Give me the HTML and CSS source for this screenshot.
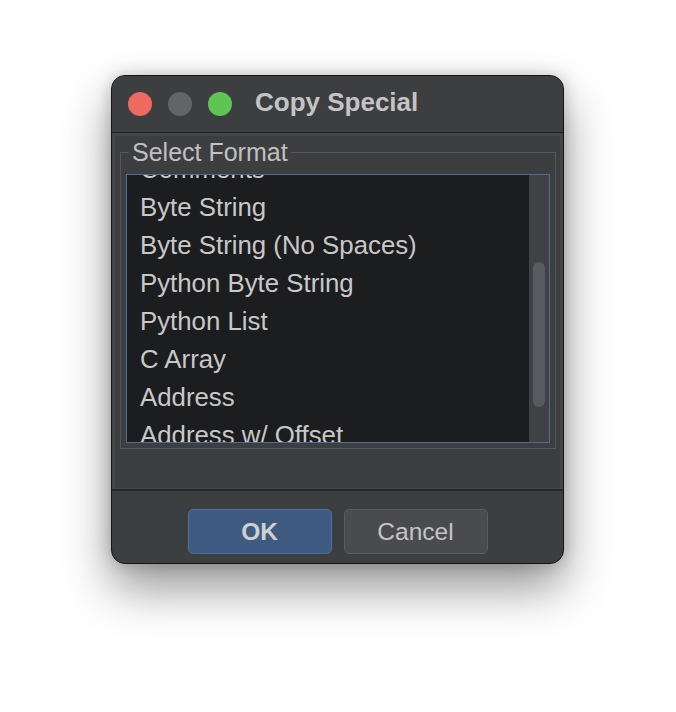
FILE: index.html
```html
<!DOCTYPE html>
<html>
<head>
<meta charset="utf-8">
<title>Copy Special</title>
<link rel="stylesheet" href="styles.css">
</head>
<body>
<div class="window">
  <div class="titlebar">
    <span class="light red"></span>
    <span class="light gray"></span>
    <span class="light green"></span>
    <span class="title">Copy Special</span>
  </div>
  <div class="panel">
    <fieldset class="group">
      <legend class="legend">Select Format</legend>
      <div class="listbox">
        <div class="viewport">
          <ul class="items">
            <li>Comments</li>
            <li>Byte String</li>
            <li>Byte String (No Spaces)</li>
            <li>Python Byte String</li>
            <li>Python List</li>
            <li>C Array</li>
            <li>Address</li>
            <li>Address w/ Offset</li>
          </ul>
        </div>
        <div class="track"><div class="thumb"></div></div>
      </div>
    </fieldset>
  </div>
  <div class="buttons">
    <button class="btn ok">OK</button>
    <button class="btn cancel">Cancel</button>
  </div>
</div>
</body>
</html>
```

FILE: styles.css
```css
html, body {
  margin: 0;
  padding: 0;
  background: #ffffff;
}
body {
  font-family: "Liberation Sans", Arial, sans-serif;
  padding: 75px 0 0 111px;
  min-height: 712px;
  box-sizing: border-box;
}
.window {
  width: 451px;
  height: 487px;
  border: 1px solid #161617;
  border-radius: 14px;
  background: #3d3e40;
  box-shadow: 0 24px 48px rgba(0, 0, 0, 0.42), 0 0 16px rgba(0, 0, 0, 0.2);
  display: flex;
  flex-direction: column;
  overflow: hidden;
}
.titlebar {
  height: 56px;
  flex: none;
  display: flex;
  align-items: center;
  padding-left: 16px;
  gap: 16px;
  border-bottom: 1px solid #1f2021;
  background: #3d3e40;
}
.light {
  width: 24px;
  height: 24px;
  border-radius: 50%;
  flex: none;
}
.red { background: #ee6a5e; }
.gray { background: #636466; }
.green { background: #5ec453; }
.title {
  margin-left: 7px;
  margin-bottom: 3px;
  font-size: 26px;
  font-weight: bold;
  color: #c4c4c4;
}
.panel {
  height: 348px;
  flex: none;
  border: 3px solid #454648;
  border-bottom: 1px solid #454648;
  padding: 4px 4px 0 5px;
  background: #3d3e40;
}
.group {
  margin: 0;
  min-inline-size: 0;
  width: 424px;
  border: 1px solid #55575a;
  padding: 0 5px 5px 5px;
}
.legend {
  margin-left: 3px;
  padding: 0 3px;
  font-size: 25px;
  line-height: 25px;
  color: #c0c0c0;
}
.listbox {
  margin-top: 9px;
  height: 267px;
  border: 1px solid #4b6c9d;
  background: #1c1d1f;
  display: flex;
}
.viewport {
  flex: 1;
  overflow: hidden;
}
.items {
  list-style: none;
  margin: -25px 0 0 0;
  padding: 0;
}
.items li {
  height: 38px;
  line-height: 38px;
  padding-left: 13px;
  font-size: 25.8px;
  color: #c8c8c8;
  white-space: nowrap;
}
.track {
  width: 20px;
  flex: none;
  background: #3f4144;
  padding: 87px 4px 0 4px;
  box-sizing: border-box;
}
.thumb {
  width: 12px;
  height: 145px;
  border-radius: 6px;
  background: #575a5e;
}
.buttons {
  flex: 1;
  border-top: 2px solid #27282a;
  display: flex;
  justify-content: center;
  gap: 12px;
  padding-top: 18px;
}
.btn {
  width: 144px;
  height: 45px;
  border-radius: 5px;
  font-family: "Liberation Sans", Arial, sans-serif;
  font-size: 24.5px;
  padding: 0;
}
.ok {
  background: #3e5a80;
  border: 1px solid #506f99;
  color: #cfd0d2;
  font-weight: bold;
}
.cancel {
  background: #4a4b4d;
  border: 1px solid #5a5b5d;
  color: #c4c4c4;
}
```
